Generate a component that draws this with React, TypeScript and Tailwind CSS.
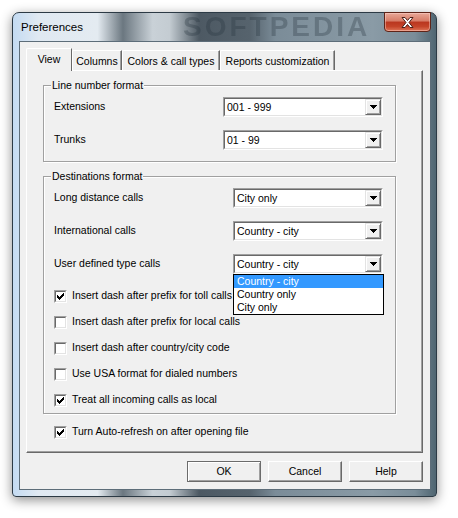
import React from "react";

// classic win32 bits
const Arrow = () => (
  <svg width="7" height="4" viewBox="0 0 7 4" shapeRendering="crispEdges">
    <path d="M0 0h7v1H0z M1 1h5v1H1z M2 2h3v1H2z M3 3h1v1H3z" fill="#000" />
  </svg>
);

const Tick = () => (
  <svg width="7" height="7" viewBox="0 0 7 7" shapeRendering="crispEdges">
    <path
      d="M0 2h1v3H0z M1 3h1v3H1z M2 4h1v3H2z M3 3h1v3H3z M4 2h1v3H4z M5 1h1v3H5z M6 0h1v3H6z"
      fill="#000"
    />
  </svg>
);

interface ComboProps {
  value: string;
  width: string;
  children?: React.ReactNode;
}

function Combo({ value, width, children }: ComboProps) {
  return (
    <div
      className={`relative ${width} h-[20px] border border-t-[#a0a0a0] border-l-[#a0a0a0] border-r-white border-b-white`}
    >
      <div className="flex h-full border border-t-[#696969] border-l-[#696969] border-r-[#e3e3e3] border-b-[#e3e3e3] bg-white">
        <div className="flex-1 pl-[2px] leading-[16px] whitespace-nowrap">{value}</div>
        <div className="flex h-[16px] w-[16px] items-center justify-center border border-t-[#e3e3e3] border-l-[#e3e3e3] border-r-[#696969] border-b-[#696969] bg-[#f0f0f0] shadow-[inset_1px_1px_0_#fff,inset_-1px_-1px_0_#a0a0a0]">
          <Arrow />
        </div>
      </div>
      {children}
    </div>
  );
}

function Check({ checked, label }: { checked?: boolean; label: string }) {
  return (
    <div className="flex h-[26px] items-center">
      <div className="h-[13px] w-[13px] border border-t-[#a0a0a0] border-l-[#a0a0a0] border-r-white border-b-white">
        <div className="flex h-full w-full items-center justify-center border border-t-[#696969] border-l-[#696969] border-r-[#e3e3e3] border-b-[#e3e3e3] bg-white">
          {checked && <Tick />}
        </div>
      </div>
      <span className="ml-[5px] whitespace-nowrap">{label}</span>
    </div>
  );
}

function Tab({ label, width, selected }: { label: string; width: string; selected?: boolean }) {
  if (selected) {
    return (
      <div
        className={`relative z-10 -mb-px flex h-[23px] ${width} justify-center rounded-tl-[2px] border-t border-l border-r border-t-white border-l-white border-r-[#696969] bg-[#f0f0f0] pt-[4px] leading-[13px]`}
      >
        {label}
      </div>
    );
  }
  return (
    <div
      className={`flex h-[20px] ${width} justify-center rounded-tl-[2px] border-t border-l border-r border-t-white border-l-white border-r-[#696969] bg-[#f0f0f0] pt-[4px] leading-[13px] shadow-[inset_-1px_0_0_#a0a0a0] whitespace-nowrap`}
    >
      {label}
    </div>
  );
}

function Btn({ label, primary }: { label: string; primary?: boolean }) {
  return (
    <div
      className={`flex h-[21px] w-[74px] items-center justify-center border bg-[#f0f0f0] ${
        primary
          ? "border-[#6b6b6b] shadow-[inset_1px_1px_0_#fff,inset_-1px_-1px_0_#a0a0a0]"
          : "border-t-white border-l-white border-r-[#696969] border-b-[#696969] shadow-[inset_-1px_-1px_0_#a0a0a0]"
      }`}
    >
      {label}
    </div>
  );
}

const rowCls = "flex h-[20px] items-center justify-between";

export default function App() {
  return (
    <div className="h-[518px] w-[458px] bg-white pl-[12px] pt-[12px] font-['Liberation_Sans',Arial,sans-serif] text-[10.5px] text-black">
      <div className="relative flex h-[485px] w-[425px] flex-col rounded-t-[7px] rounded-b-[4px] border border-[#2c3a45] bg-[linear-gradient(90deg,#c4dbf2_0%,#e0e9f2_6%,#e4ebf1_20%,#6b7780_26%,#c9d1d7_33%,#c4ccd2_37%,#4d5963_44%,#56636d_56%,#7b8c98_62%,#8a9ba6_85%,#7a8d99_95%,#4f6571_100%)] shadow-[0_3px_12px_rgba(0,0,0,0.45)]">
        {/* title bar */}
        <div className="relative flex h-[28px] items-start justify-between">
          <span className="mt-[7px] pl-[8px] text-[11.5px] leading-[14px]">Preferences</span>
          <span className="pointer-events-none absolute left-[170px] top-[0px] text-[28px] font-bold leading-none tracking-[3px] text-[#26323b]/30 blur-[0.7px]">
            SOFTPEDIA
          </span>
          <div className="relative -mt-px mr-[5px] flex h-[20px] w-[47px] items-center justify-center rounded-b-[4px] border border-[#5e2418] bg-[linear-gradient(180deg,#e9a898_0%,#d67b66_45%,#b9361f_50%,#c44429_75%,#de7558_100%)] shadow-[inset_0_0_0_1px_rgba(255,220,210,0.45)]">
            <svg width="13" height="11" viewBox="0 0 13 11">
              <path
                d="M1 0.5h3l2.5 3 2.5-3h3l-4 5 4 5h-3l-2.5-3-2.5 3h-3l4-5z"
                fill="#fff"
                stroke="#4a2018"
                strokeWidth="1"
              />
            </svg>
          </div>
        </div>

        {/* client */}
        <div className="mb-[6px] ml-[6px] mr-[5px] h-[449px] w-[412px] border border-[#5d6d79] bg-[#f0f0f0]">
          <div className="ml-[6px] mt-[6px]">
            <div className="flex h-[22px] items-end">
              <Tab label="View" width="w-[46px]" selected />
              <Tab label="Columns" width="w-[50px]" />
              <Tab label="Colors & call types" width="w-[98px]" />
              <Tab label="Reports customization" width="w-[115px]" />
            </div>

            <div className="h-[383px] w-[397px] border border-l-white border-t-white border-r-[#696969] border-b-[#696969] bg-[#f0f0f0] pl-[16px] pt-[14px] shadow-[inset_-1px_-1px_0_#a0a0a0]">
              {/* Line number format */}
              <div className="h-[77px] w-[353px] border border-[#a0a0a0] shadow-[inset_1px_1px_0_#fff,1px_1px_0_#fff]">
                <div className="-mt-[7px] ml-[7px] w-fit bg-[#f0f0f0] px-[1px] leading-[13px]">
                  Line number format
                </div>
                <div className="mt-[5px] flex flex-col gap-[13px] pl-[10px] pr-[12px]">
                  <div className={rowCls}>
                    <span>Extensions</span>
                    <Combo value="001 - 999" width="w-[160px]" />
                  </div>
                  <div className={rowCls}>
                    <span>Trunks</span>
                    <Combo value="01 - 99" width="w-[160px]" />
                  </div>
                </div>
              </div>

              {/* Destinations format */}
              <div className="mt-[14px] h-[238px] w-[353px] border border-[#a0a0a0] shadow-[inset_1px_1px_0_#fff,1px_1px_0_#fff]">
                <div className="-mt-[7px] ml-[7px] w-fit bg-[#f0f0f0] px-[1px] leading-[13px]">
                  Destinations format
                </div>
                <div className="mt-[5px] flex flex-col gap-[13px] pl-[10px] pr-[12px]">
                  <div className={rowCls}>
                    <span>Long distance calls</span>
                    <Combo value="City only" width="w-[150px]" />
                  </div>
                  <div className={rowCls}>
                    <span>International calls</span>
                    <Combo value="Country - city" width="w-[150px]" />
                  </div>
                  <div className={rowCls}>
                    <span>User defined type calls</span>
                    <Combo value="Country - city" width="w-[150px]">
                      <div className="absolute left-[-1px] top-[19px] z-20 w-[151px] border border-black bg-white">
                        <div className="h-[13px] bg-[#3399ff] pl-[3px] leading-[13px] text-white">Country - city</div>
                        <div className="h-[13px] pl-[3px] leading-[13px]">Country only</div>
                        <div className="h-[13px] pl-[3px] leading-[13px]">City only</div>
                      </div>
                    </Combo>
                  </div>
                </div>
                <div className="mt-[9px] pl-[10px]">
                  <Check checked label="Insert dash after prefix for toll calls" />
                  <Check label="Insert dash after prefix for local calls" />
                  <Check label="Insert dash after country/city code" />
                  <Check label="Use USA format for dialed numbers" />
                  <Check checked label="Treat all incoming calls as local" />
                </div>
              </div>

              <div className="ml-[11px] mt-[5px]">
                <Check checked label="Turn Auto-refresh on after opening file" />
              </div>
            </div>

            <div className="mt-[8px] flex w-[397px] justify-end gap-[7px]">
              <Btn label="OK" primary />
              <Btn label="Cancel" />
              <Btn label="Help" />
            </div>
          </div>
        </div>
      </div>
    </div>
  );
}
